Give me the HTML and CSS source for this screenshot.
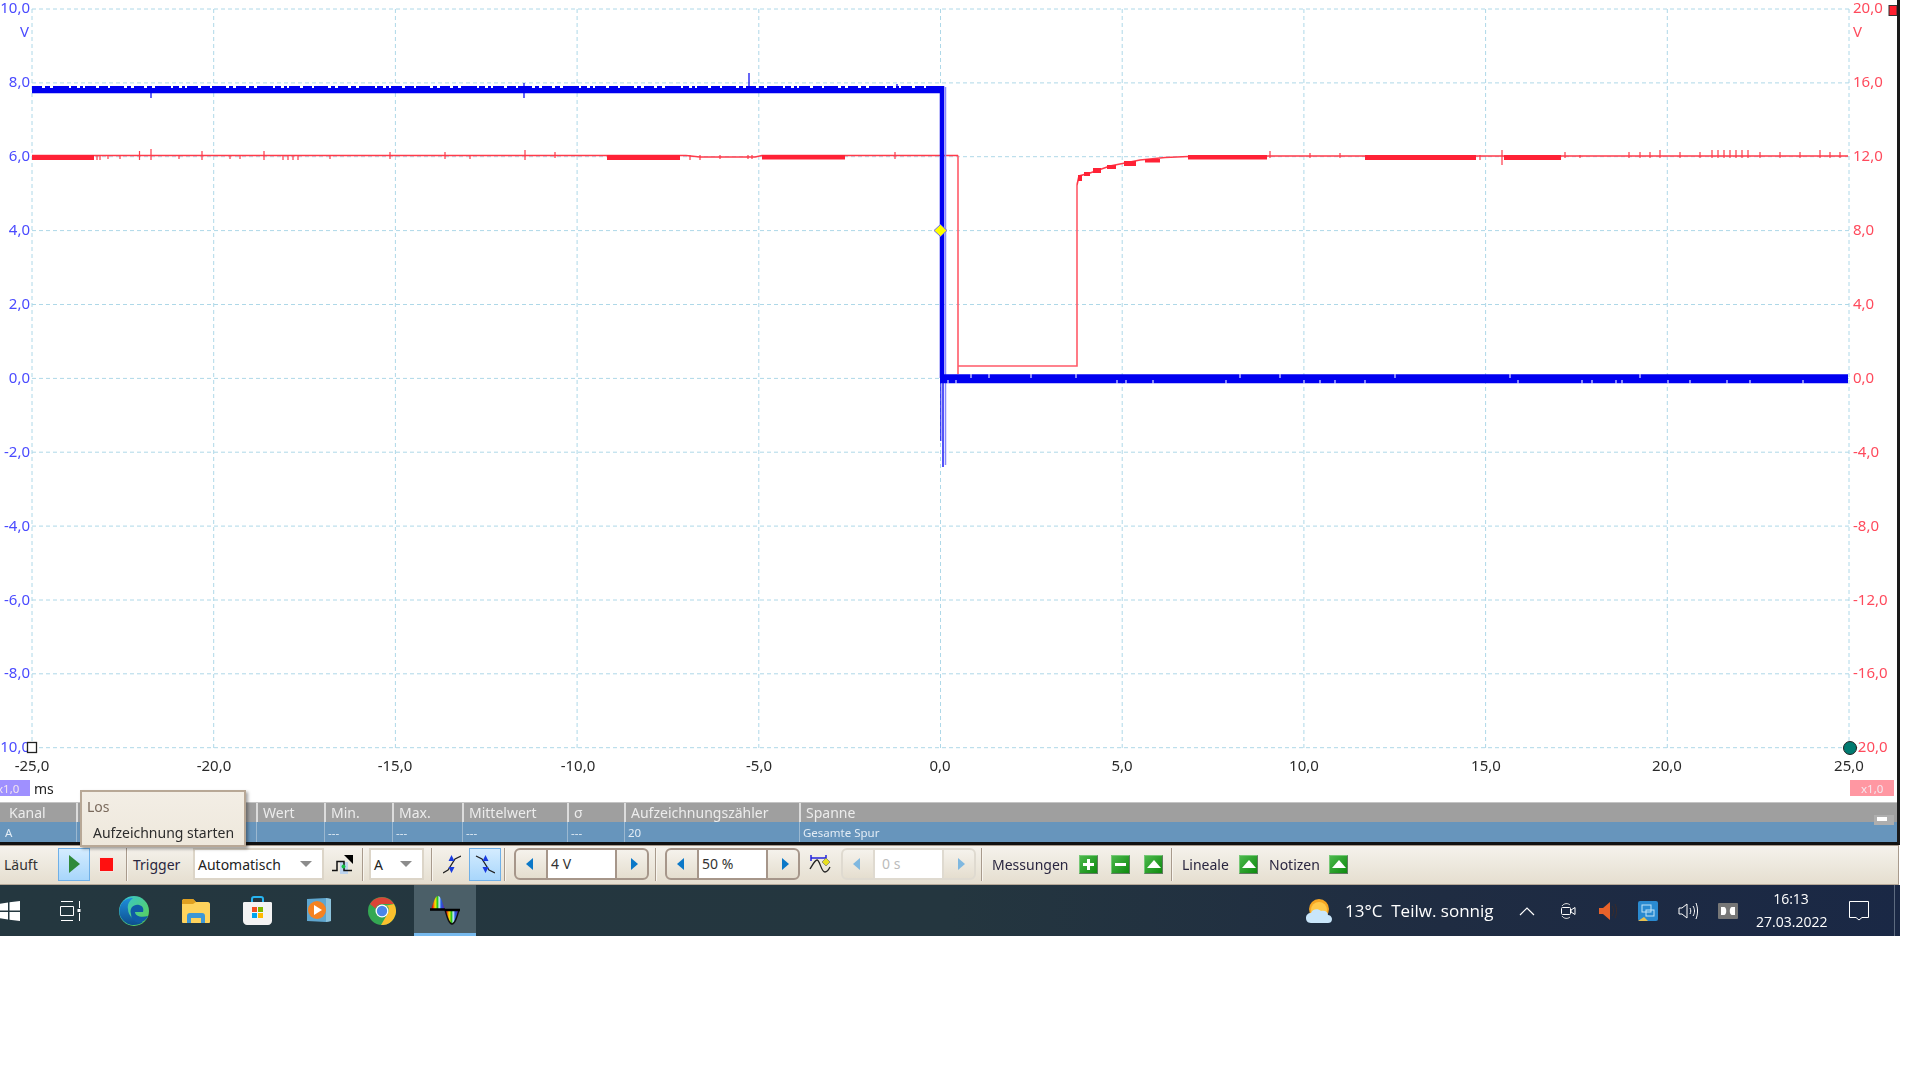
FILE: index.html
```html
<!DOCTYPE html>
<html lang="de">
<head>
<meta charset="utf-8">
<title>PicoScope</title>
<link rel="stylesheet" href="styles.css">
</head>
<body>
<div class="app">
  <div class="window">
    <svg class="scope" width="1897" height="802" viewBox="0 0 1897 802">
      <defs>
        <path id="gridv" d="M32 9V748M213.7 9V748M395.4 9V748M577.1 9V748M758.8 9V748M940.5 9V748M1122.2 9V748M1303.9 9V748M1485.6 9V748M1667.3 9V748M1849 9V748"/>
        <path id="gridh" d="M32 9H1849M32 82.9H1849M32 156.7H1849M32 230.6H1849M32 304.5H1849M32 378.4H1849M32 452.2H1849M32 526.1H1849M32 600H1849M32 673.8H1849M32 747.7H1849"/>
      </defs>
      <use href="#gridv" class="grid"/>
      <use href="#gridh" class="grid"/>

      <g class="yl">
        <text x="30" y="13">10,0</text><text x="29" y="37">V</text>
        <text x="30" y="87">8,0</text><text x="30" y="161">6,0</text><text x="30" y="235">4,0</text>
        <text x="30" y="309">2,0</text><text x="30" y="383">0,0</text><text x="30" y="457">-2,0</text>
        <text x="30" y="531">-4,0</text><text x="30" y="605">-6,0</text><text x="30" y="678">-8,0</text><text x="30" y="752">-10,0</text>
      </g>
      <g class="yr">
        <text x="1853" y="13">20,0</text><text x="1853" y="37">V</text>
        <text x="1853" y="87">16,0</text><text x="1853" y="161">12,0</text><text x="1853" y="235">8,0</text>
        <text x="1853" y="309">4,0</text><text x="1853" y="383">0,0</text><text x="1853" y="457">-4,0</text>
        <text x="1853" y="531">-8,0</text><text x="1853" y="605">-12,0</text><text x="1853" y="678">-16,0</text><text x="1853" y="752">-20,0</text>
      </g>
      <g class="xl">
        <text x="32" y="771">-25,0</text><text x="214" y="771">-20,0</text><text x="395" y="771">-15,0</text>
        <text x="578" y="771">-10,0</text><text x="759" y="771">-5,0</text><text x="940" y="771">0,0</text>
        <text x="1122" y="771">5,0</text><text x="1304" y="771">10,0</text><text x="1486" y="771">15,0</text>
        <text x="1667" y="771">20,0</text><text x="1849" y="771">25,0</text>
      </g>
      <text class="unit" x="34" y="794">ms</text>
      <rect x="0" y="780" width="30" height="16" class="zoom-a"/>
      <text class="zoom-t" x="-3" y="793">x1,0</text>
      <rect x="1850" y="780" width="44" height="16" class="zoom-b"/>
      <text class="zoom-t" x="1861" y="793">x1,0</text>

      <!-- red trace -->
      <path class="red-soft" d="M958 155.500V374M958 366H1077V185"/>
      <path class="red" d="M32 155.500H686L700 157H755L762 155.500H958M1077 185L1079 176L1090 173L1110 166L1140 160L1165 157.500L1200 156H1848"/>
      <path class="red-fill" d="M32 155H94V160H32ZM607 155H680V160H607ZM762 155H845V159.500H762ZM1188 155H1267V159.500H1188ZM1365 155H1476V160H1365ZM1504 155H1561V160H1504ZM1078 175H1082V181H1078ZM1084 172H1090V176H1084ZM1093 168H1101V173H1093ZM1107 165H1116V169H1107ZM1124 161H1136V166H1124ZM1145 159H1160V162.500H1145Z"/>
      <path class="red-tick" d="M139.500 151V160M151 149V160M202 151V160M264 151V160M97 155V160M100 155V160M108 155V159M120 155V159M179 155V159M230 155V159M240 155V159M283 155V160M288 155V160M293 155V160M298 155V160M330 155V159M390 152V159M445 152V159M470 155V159M525 150V160M555 152V158M690 155V160M700 155V160M720 155V159M748 155V159M752 155V159M895 152V159M1270 151V158M1310 153V158M1340 153V158M1480 155V160M1502 150V165M1565 152V158M1580 155V158M1629 152V158M1640 152V158M1650 152V158M1660 150V158M1680 152V158M1700 152V158M1712 150V158M1718 150V158M1724 150V158M1730 150V158M1736 150V158M1742 150V158M1748 150V158M1760 152V158M1780 152V158M1800 152V158M1820 150V158M1830 152V158M1840 152V158"/>

      <!-- blue trace -->
      <path class="blue-band" d="M32 90.600H943"/>
      <path class="blue-dash" d="M32 87H943"/>
      <path class="blue-tick" d="M151 92V98M524 83V98M749 73V90M897 84V92"/>
      <path class="blue-soft" d="M945.500 87V378M945.500 378V465M943 378V467"/>
      <path class="blue-v" d="M942 86V378"/>
      <path class="blue-thin" d="M940.800 378V441M943 378V467"/>
      <path class="blue-bottom" d="M940 378.800H1848"/>
      <path class="notch" d="M971 374V378M989 374V378M1031 374V378M1076 374V378M1240 374V378M1280 374V378M1395 374V378M1510 374V378M1640 374V378M948 380V384M956 380V384M1117 380V384M1126 380V384M1153 380V384M1226 380V384M1304 380V384M1320 380V384M1335 380V384M1365 380V384M1518 380V384M1582 380V384M1592 380V384M1616 380V384M1622 380V384M1668 380V384M1690 380V384M1727 380V384M1750 380V384M1803 380V384"/>
      <path class="diamond" d="M940.500 224.500L947 230.500L940.500 236.500L934 230.500Z"/>

      <rect class="marker-a" x="27.500" y="742.500" width="9" height="10"/>
      <circle class="marker-b" cx="1850" cy="748" r="6.500"/>
      <rect class="marker-c" x="1889" y="5.500" width="8" height="10"/>
    </svg>

    <div class="table">
      <div class="row head">
        <div class="cell c1">Kanal</div><div class="cell c2"></div><div class="cell c3">Wert</div><div class="cell c4">Min.</div><div class="cell c5">Max.</div><div class="cell c6">Mittelwert</div><div class="cell c7">σ</div><div class="cell c8">Aufzeichnungszähler</div><div class="cell c9">Spanne</div>
      </div>
      <div class="row data">
        <div class="cell c1">A</div><div class="cell c2"></div><div class="cell c3"></div><div class="cell c4">---</div><div class="cell c5">---</div><div class="cell c6">---</div><div class="cell c7">---</div><div class="cell c8">20</div><div class="cell c9">Gesamte Spur</div>
      </div>
      <div class="collapse"></div>
    </div>

    <div class="tooltip">
      <div class="tip-title">Los</div>
      <div class="tip-text">Aufzeichnung starten</div>
    </div>
  </div>

  <div class="toolbar">
    <span class="tb-text w-run">Läuft</span>
    <button class="tb-btn active play"><svg width="14" height="20" viewBox="0 0 14 20"><path d="M2 1L13 10L2 19Z" fill="#2f8a3a"/></svg></button>
    <span class="stop"></span>
    <span class="sep m13"></span>
    <span class="tb-text w-trigger m5">Trigger</span>
    <span class="select w-auto"><span class="sel-text">Automatisch</span><i class="caret"></i></span>
    <svg class="m8" width="21" height="20" viewBox="0 0 21 20"><rect x="8" y="8" width="8" height="12" fill="#bcd3ee"/><path d="M0 16.500H5V7.500H12V16.500H20" fill="none" stroke="#111" stroke-width="1.500"/><path d="M12 1H21V10Z" fill="#000"/><circle cx="11.500" cy="12.500" r="2" fill="#18c24a"/></svg>
    <span class="sep m9"></span>
    <span class="select w-a m5"><span class="sel-text">A</span><i class="caret"></i></span>
    <span class="sep m7"></span>
    <svg class="m10" width="18" height="22" viewBox="0 0 18 22"><path d="M0 20L5 17L12 6L18 3" fill="none" stroke="#222" stroke-width="1.300"/><path d="M8.500 2L11.500 8H5.500ZM8.500 20L5.500 14H11.500Z" fill="#1a3ce0"/></svg>
    <button class="tb-btn active fall m8"><svg width="20" height="22" viewBox="0 0 20 22"><path d="M1 3L7 6L14 17L20 20" fill="none" stroke="#222" stroke-width="1.300"/><path d="M10.500 2L13.500 8H7.500ZM10.500 20L7.500 14H13.500Z" fill="#1a3ce0"/></svg></button>
    <span class="sep m3"></span>
    <span class="spin m8"><span class="spin-btn"><i class="tri left"></i></span><span class="spin-val">4 V</span><span class="spin-btn"><i class="tri right"></i></span></span>
    <span class="sep m6"></span>
    <span class="spin m8"><span class="spin-btn"><i class="tri left"></i></span><span class="spin-val">50 %</span><span class="spin-btn"><i class="tri right"></i></span></span>
    <svg class="m9" width="22" height="20" viewBox="0 0 22 20"><path d="M2 4H17" stroke="#2222dd" stroke-width="1.500"/><path d="M2 1V7M17 1V7" stroke="#2222dd" stroke-width="1.500"/><path d="M1 15C4 10 6 6 8 6C11 6 12 18 16 18C18 18 20 15 21 13" fill="none" stroke="#222" stroke-width="1.300"/><path d="M17 4L21 8L17 12L13 8Z" fill="#e8e020" stroke="#777" stroke-width=".7"/></svg>
    <span class="spin disabled m10"><span class="spin-btn"><i class="tri left"></i></span><span class="spin-val">0 s</span><span class="spin-btn"><i class="tri right"></i></span></span>
    <span class="sep m5"></span>
    <span class="tb-text w-mess m9">Messungen</span>
    <span class="green"><i class="plus"></i></span>
    <span class="green m13"><i class="minus"></i></span>
    <span class="green m14"><i class="up"></i></span>
    <span class="sep m8"></span>
    <span class="tb-text w-lin m9">Lineale</span>
    <span class="green"><i class="up"></i></span>
    <span class="tb-text w-not m11">Notizen</span>
    <span class="green"><i class="up"></i></span>
  </div>

  <div class="taskbar">
    <div class="apps">
      <div class="task"><svg width="24" height="20" viewBox="0 0 24 20"><path d="M2 3L11 1.500V9.500H2ZM12.500 1.300L23 0V9.500H12.500ZM2 11H11V18.500L2 17ZM12.500 11H23V20L12.500 18.700Z" fill="#fff"/></svg></div>
      <div class="task nudge-2"><svg width="21" height="20" viewBox="0 0 21 20"><path d="M1 .5H13M1 19.500H13M.500 5.500H13.500V14.500H.500ZM19.500 0V7M19.500 12V20" fill="none" stroke="#fff" stroke-width="1"/><rect x="17.500" y="8" width="3" height="3" fill="#fff"/></svg></div>
      <div class="task"><svg width="30" height="30" viewBox="0 0 30 30"><defs><linearGradient id="edgeA" x1="0" y1="0" x2="1" y2="1"><stop offset="0" stop-color="#36c3d8"/><stop offset="1" stop-color="#5ed34a"/></linearGradient><linearGradient id="edgeB" x1="0" y1="0" x2="0" y2="1"><stop offset="0" stop-color="#1f8edb"/><stop offset="1" stop-color="#0d4f8e"/></linearGradient></defs><circle cx="15" cy="15" r="15" fill="url(#edgeA)"/><path d="M1 11C3 4 9 2 14 2C10 5 8 9 9 13C9 20 15 25 24 26C19 30 9 31 3 23C0 19 0 15 1 11Z" fill="url(#edgeB)"/><path d="M12 18C10 12 15 8 20 9C24 10 25 13 24 16H16C16 20 22 22 29 20C27 25 21 28 17 26C14 24 12 22 12 18Z" fill="#0f5ba6"/></svg></div>
      <div class="task"><svg width="28" height="24" viewBox="0 0 28 24"><path d="M0 2C0 1 1 0 2 0H11L14 3H26C27 3 28 4 28 5V23C28 24 27 24 26 24H2C1 24 0 24 0 23Z" fill="#ffd35c"/><path d="M0 2C0 1 1 0 2 0H11L14 3L11 5H0Z" fill="#e0a020"/><path d="M5 24V17C5 15 6 14 8 14H20C22 14 23 15 23 17V24H19V19H9V24Z" fill="#3d97d6"/></svg></div>
      <div class="task nudge-2"><svg width="29" height="29" viewBox="0 0 29 29"><path d="M9 8V3C9 1.500 10 1 11 1H18C19 1 20 1.500 20 3V8" fill="none" stroke="#27b4f0" stroke-width="2"/><path d="M0 7C0 6 1 6 2 6H27C28 6 29 6 29 7V25C29 27 27 29 25 29H4C2 29 0 27 0 25Z" fill="#f3f3f3"/><rect x="9" y="11" width="5" height="5" fill="#f25022"/><rect x="15" y="11" width="5" height="5" fill="#7fba00"/><rect x="9" y="17" width="5" height="5" fill="#00a4ef"/><rect x="15" y="17" width="5" height="5" fill="#ffb900"/></svg></div>
      <div class="task nudge-5"><svg width="25" height="25" viewBox="0 0 25 25"><path d="M1 1L20 0L25 1V23L20 24L1 23Z" fill="#5fa6cf"/><path d="M20 0L25 1V23L20 24Z" fill="#8cc3dd"/><circle cx="11" cy="12" r="9" fill="#f58220"/><path d="M8 7L16 12L8 17Z" fill="#fff"/></svg></div>
      <div class="task nudge-2"><svg width="28" height="28" viewBox="0 0 28 28"><circle cx="14" cy="14" r="14" fill="#34a853"/><path d="M2 7A14 14 0 0 1 26 7H14A7 7 0 0 0 7.500 11.500Z" fill="#db4437"/><path d="M26 7A14 14 0 0 1 13 28L20 16A7 7 0 0 0 20 9.500H14Z" fill="#fbc02d"/><circle cx="14" cy="14" r="6.500" fill="#fff"/><circle cx="14" cy="14" r="5.200" fill="#4a86e8"/></svg></div>
      <div class="task current"><svg width="30" height="30" viewBox="0 0 30 30"><defs><linearGradient id="rb" x1="0" y1="0" x2="1" y2="0"><stop offset=".1" stop-color="#e01010"/><stop offset=".3" stop-color="#ffe600"/><stop offset=".48" stop-color="#18c020"/><stop offset=".58" stop-color="#d8f0ff"/><stop offset=".72" stop-color="#2060e0"/><stop offset=".95" stop-color="#6020b0"/></linearGradient></defs><path d="M1 15C3 9 5 1 8 1C11 1 13 9 15 15Z" fill="url(#rb)"/><path d="M15 15C17 22 19 29 22 29C25 29 27 22 29 15Z" fill="url(#rb)" stroke="#111" stroke-width="1.300"/><path d="M0 14.500H15M15 15H30" stroke="#000" stroke-width="2.500"/></svg></div>
    </div>
    <div class="tray">
      <svg width="26" height="24" viewBox="0 0 26 24"><circle cx="13" cy="10" r="10" fill="#f5a623"/><circle cx="13" cy="11" r="8" fill="#ffc94a"/><path d="M5 24C1 24 0 21 0 19C0 16 2 14 5 14C6 10 12 9 15 12C19 11 22 13 22 16C25 16 26 19 26 20C26 23 24 24 22 24Z" fill="#c9e6fa"/></svg>
      <span class="weather">13°C&nbsp; Teilw. sonnig</span>
      <svg class="t-chev" width="16" height="10" viewBox="0 0 16 10"><path d="M1 9L8 2L15 9" fill="none" stroke="#fff" stroke-width="1.200"/></svg>
      <svg class="t-meet" width="15" height="18" viewBox="0 0 15 18"><path d="M1 4C3 1 7 1 9 3M1 14C3 17 7 17 9 15" fill="none" stroke="#ddd"/><rect x=".5" y="5.500" width="9" height="7" rx="1" fill="none" stroke="#fff"/><path d="M10 8L14 5.500V12.500L10 10Z" fill="none" stroke="#fff"/></svg>
      <svg class="t-spk" width="19" height="18" viewBox="0 0 19 18"><path d="M0 6H4L11 0V18L4 12H0Z" fill="#e8622a"/><path d="M13 4C15 7 15 11 13 14M16 2C18 6 18 12 16 16" fill="none" stroke="#3b2a2a"/></svg>
      <svg class="t-int" width="20" height="20" viewBox="0 0 20 20"><rect width="20" height="20" rx="2" fill="#2a8ad0"/><rect x="4" y="4" width="9" height="7" fill="none" stroke="#bfe3f7"/><rect x="8" y="9" width="8" height="6" fill="none" stroke="#bfe3f7"/><path d="M0 20L6 16L10 20Z" fill="#e7c050"/></svg>
      <svg class="t-vol" width="20" height="18" viewBox="0 0 20 18"><path d="M1 6H4L9 2V16L4 12H1Z" fill="none" stroke="#fff"/><path d="M12 6C13 8 13 10 12 12M15 4C17 7 17 11 15 14M18 1C20 6 20 12 18 17" fill="none" stroke="#fff"/></svg>
      <svg class="t-dol" width="20" height="16" viewBox="0 0 20 16"><rect width="20" height="16" rx="1" fill="#777"/><path d="M3 4H6C9 4 9 12 6 12H3ZM17 4H14C11 4 11 12 14 12H17Z" fill="#fff"/></svg>
      <div class="clock"><div>16:13</div><div>27.03.2022</div></div>
      <svg class="t-note" width="20" height="20" viewBox="0 0 20 20"><path d="M.5 .5H19.500V16.500H13L10 19L7 16.500H.5Z" fill="none" stroke="#fff"/></svg>
      <span class="t-edge"></span>
    </div>
  </div>
</div>
</body>
</html>
```
FILE: styles.css
```css
html, body { margin: 0; padding: 0; background: #fff; }
body { width: 1920px; height: 1080px; overflow: hidden; font-family: "Noto Sans", "Liberation Sans", sans-serif; }
.app { width: 1900px; display: flex; flex-direction: column; filter: blur(.35px); }

.window { position: relative; width: 1897px; border-right: 3px solid #1a1a1a; border-bottom: 3px solid #111; background: #fff; }
.scope { display: block; overflow: hidden; }
.grid { fill: none; stroke: #aed8e8; stroke-width: 1; stroke-dasharray: 4 3; }
.yl text, .yr text, .xl text, .unit { font-size: 15px; font-family: "Noto Sans", sans-serif; }
.yl text { fill: #4a4aff; text-anchor: end; }
.yr text { fill: #ff4a5c; }
.xl text { fill: #2a2a2a; text-anchor: middle; }
.unit { fill: #222; font-size: 14px; }
.zoom-a { fill: #9f90ff; }
.zoom-b { fill: #ff97a2; }
.zoom-t { fill: #f4e6ee; font-size: 11.500px; }

.red { fill: none; stroke: #ff3a4a; stroke-width: 1.600; }
.red-soft { fill: none; stroke: #ff5a68; stroke-width: 1.600; }
.red-fill { fill: #ff2236; }
.red-tick { stroke: #ff3a4a; stroke-width: 1.200; }
.blue-band { stroke: #0000f0; stroke-width: 5.300; fill: none; }
.blue-dash { stroke: #0000f0; stroke-width: 2; fill: none; stroke-dasharray: 10 3 5 3 16 2 6 3 3 2 11 3 9 2 14 3 4 3; }
.blue-tick { stroke: #0000f0; stroke-width: 1.200; fill: none; }
.blue-v { stroke: #0000f0; stroke-width: 4.500; fill: none; }
.blue-soft { stroke: #8a8aff; stroke-width: 1.500; fill: none; }
.blue-thin { stroke: #0000f0; stroke-width: 1; fill: none; }
.blue-bottom { stroke: #0000f0; stroke-width: 9; fill: none; }
.notch { stroke: #dfe0ff; stroke-width: 1.200; fill: none; }
.diamond { fill: #ffff00; stroke: #6a6ae8; stroke-width: 1; }
.marker-a { fill: #fff; stroke: #222; stroke-width: 1.300; }
.marker-b { fill: #007a70; stroke: #222; stroke-width: 1; }
.marker-c { fill: #ff2030; stroke: #333; stroke-width: 1; }

.table { position: relative; }
.row { display: grid; grid-template-columns: 76px 180px 68px 68px 70px 105px 57px 175px 1fr; height: 20px; align-items: stretch; }
.head { background: #9f9f9f; border-top: 1px solid #c4c4c4; height: 19px; color: #ececec; font-size: 14px; line-height: 19px; }
.head .cell { border-left: 2px solid #dcdcdc; padding-left: 5px; }
.data { background: #6795bc; color: #e2ecf5; font-size: 11.500px; line-height: 21px; height: 20px; }
.data .cell { border-left: 1px solid #9bb8d0; padding-left: 3px; }
.cell { overflow: hidden; white-space: nowrap; }
.head .c1 { border-left: none; padding-left: 9px; }
.data .c1 { border-left: none; padding-left: 5px; }
.collapse { position: absolute; right: 3px; top: 13px; width: 20px; height: 10px; background: #aeaeae; }
.collapse::after { content: ""; position: absolute; left: 3px; top: 2px; width: 10px; height: 4px; background: #fff; }

.tooltip { position: absolute; left: 80px; top: 790px; width: 162px; height: 53px; background: linear-gradient(#f3eee5, #eee8dc); border: 2px solid #b8a896; box-shadow: 2px 2px 3px rgba(0,0,0,.35); font-size: 14px; color: #2c2c2c; }
.tip-title { color: #7a6a5c; padding: 5px 0 0 5px; line-height: 20px; }
.tip-text { padding: 6px 0 0 11px; line-height: 20px; white-space: nowrap; }

.toolbar { height: 40px; width: 1899px; box-sizing: border-box; padding-bottom: 2px; border-top: 1px solid #a89a8c; border-bottom: 1px solid #b5a898; border-right: 1px solid #a89a8c; background: linear-gradient(#f5f2ec, #e5decf); display: flex; align-items: center; font-size: 14px; color: #333; }
.tb-text { white-space: nowrap; flex: none; color: #2a2640; }
.w-run { padding-left: 4px; box-sizing: border-box; color: #333; width: 58px; }
.w-trigger { width: 60px; }
.w-mess { width: 87px; }
.w-lin { width: 57px; }
.w-not { width: 60px; }
.m3 { margin-left: 3px; } .m5 { margin-left: 5px; } .m6 { margin-left: 6px; } .m7 { margin-left: 7px; } .m8 { margin-left: 8px; } .m9 { margin-left: 9px; } .m10 { margin-left: 10px; } .m11 { margin-left: 11px; } .m13 { margin-left: 13px; } .m14 { margin-left: 14px; }
.toolbar svg { flex: none; display: block; }

.tb-btn { flex: none; width: 32px; height: 33px; padding: 0; display: flex; align-items: center; justify-content: center; box-sizing: border-box; }
.active { border: 1px solid #6fb0e8; background: linear-gradient(#d4ecff, #a8d6fb); }
.stop { flex: none; width: 13px; height: 13px; margin-left: 10px; background: #ff1010; box-shadow: 0 0 0 1px #f4e6e0; }
.sep { flex: none; width: 2px; height: 33px; background: linear-gradient(90deg, #a89a8c 50%, #f8f5ef 50%); }

.select { flex: none; height: 32px; box-sizing: border-box; background: #fff; border: 2px solid #dcd5c8; display: flex; align-items: center; justify-content: space-between; padding: 0 10px 0 3px; color: #222; }
.w-auto { width: 131px; }
.w-a { width: 55px; }
.caret { width: 0; height: 0; border-left: 6px solid transparent; border-right: 6px solid transparent; border-top: 6px solid #8c8c8c; }

.spin { flex: none; width: 135px; height: 32px; box-sizing: border-box; border: 2px solid #a6968a; border-radius: 6px; display: flex; overflow: hidden; background: linear-gradient(#f5f2ec, #e5decf); }
.spin-btn { width: 30px; flex: none; display: flex; align-items: center; justify-content: center; box-sizing: border-box; }
.spin-btn:first-child { padding-right: 4px; }
.spin-btn:last-child { padding-left: 4px; }
.spin-val { flex: 1; background: #fff; border-left: 2px solid #a6968a; border-right: 2px solid #a6968a; padding-left: 3px; line-height: 28px; color: #333; }
.tri { width: 0; height: 0; border-top: 6px solid transparent; border-bottom: 6px solid transparent; }
.tri.left { border-right: 7px solid #0b78c8; }
.tri.right { border-left: 7px solid #0b78c8; }
.disabled { border-color: #dfdad0; }
.disabled .spin-val { border-color: #dfdad0; color: #bbb; padding-left: 7px; }
.disabled .tri.left { border-right-color: #7fb8e0; }
.disabled .tri.right { border-left-color: #7fb8e0; }

.green { flex: none; position: relative; width: 19px; height: 19px; box-sizing: border-box; background: linear-gradient(135deg, #4cb84c, #0e8a0e); border: 1px solid #76c876; border-right-color: #607a60; border-bottom-color: #607a60; }
.green i { position: absolute; display: block; }
.plus { left: 3px; top: 7px; width: 11px; height: 3px; background: #fff; }
.plus::after { content: ""; position: absolute; left: 4px; top: -4px; width: 3px; height: 11px; background: #fff; }
.minus { left: 3px; top: 7px; width: 11px; height: 3px; background: #fff; }
.up { left: 2px; top: 4px; width: 0; height: 0; border-left: 7px solid transparent; border-right: 7px solid transparent; border-bottom: 8px solid #fff; }

.taskbar { height: 51px; width: 1900px; display: flex; justify-content: space-between; background: linear-gradient(90deg, #24373f 0, #24363f 50%, #1f2c42 76%, #1a2845 100%); color: #fff; overflow: hidden; }
.apps { display: flex; margin-left: -22px; }
.task { width: 62.300px; height: 51px; flex: none; display: flex; align-items: center; justify-content: center; box-sizing: border-box; }
.task svg { display: block; }
.nudge-2 { padding-right: 2px; }
.nudge-5 { padding-right: 5px; }
.current { background: #4b5f68; border-bottom: 3px solid #76b9ed; padding-top: 1px; }
.tray { display: flex; align-items: center; }
.tray svg { display: block; flex: none; }
.weather { font-size: 17px; margin-left: 13px; width: 147px; white-space: nowrap; font-family: "Open Sans", sans-serif; }
.t-chev { margin-left: 27px; }
.t-meet { margin-left: 26px; }
.t-spk { margin-left: 23px; }
.t-int { margin-left: 20px; }
.t-vol { margin-left: 20px; }
.t-dol { margin-left: 20px; }
.clock { width: 70px; margin-left: 18px; text-align: center; font-size: 14px; line-height: 23px; font-family: "Open Sans", sans-serif; padding-bottom: 2px; }
.t-note { margin-left: 23px; }
.t-edge { width: 1px; height: 51px; margin-left: 25px; margin-right: 5px; background: #5d6b80; }
```
